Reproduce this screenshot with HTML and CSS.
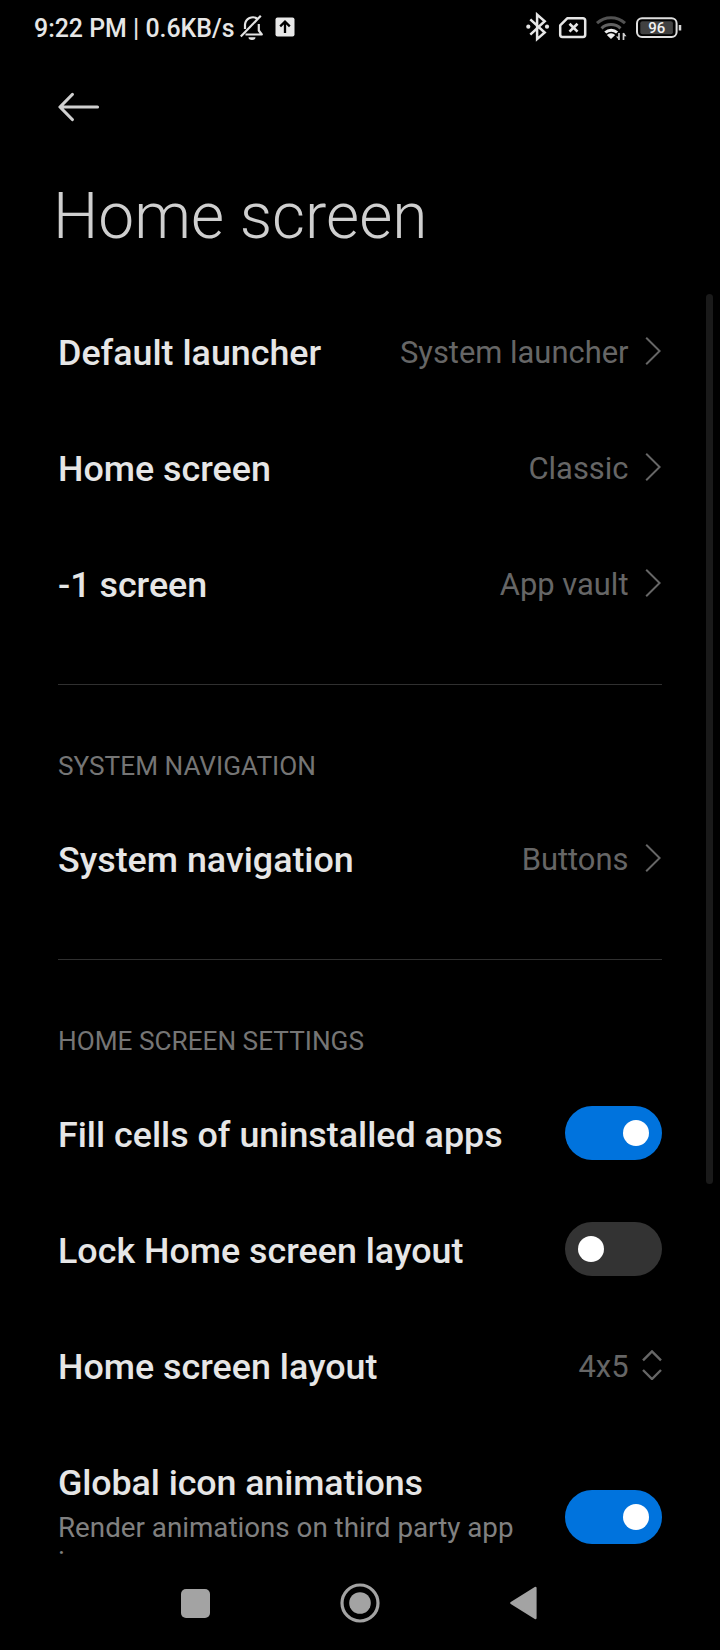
FILE: index.html
```html
<!DOCTYPE html>
<html lang="en">
<head>
<meta charset="utf-8">
<title>Home screen</title>
<link rel="stylesheet" href="styles.css">
</head>
<body>
<div class="phone">
  <header class="status">
    <span class="clock">9:22 PM | 0.6KB/s</span>
    <svg class="bell" width="24" height="28" viewBox="0 0 24 28" fill="none" stroke="#e4e4e4" stroke-width="2.2" stroke-linejoin="round">
      <path d="M17.3 4.6A8 8 0 0 0 5 10.5V15M5.5 20.5h16.3l-3-4V10"/><path d="M.8 22.4 20.8 1.8" /><path d="M8.5 23.3h7a3.5 2.7 0 0 1-7 0z" fill="#e4e4e4" stroke="none"/>
    </svg>
    <svg class="upload" width="20" height="20" viewBox="0 0 20 20">
      <rect x=".5" y=".5" width="19" height="19" rx="2" fill="#e8e8e8"/><path d="M10 16V5M5.2 9.4 10 4.6l4.8 4.8" fill="none" stroke="#000" stroke-width="2.3"/>
    </svg>
    <span class="spacer"></span>
    <svg class="status-icons" width="160" height="32" viewBox="0 0 160 32" fill="none">
      <g stroke="#e6e6e6" stroke-width="2.5"><path d="m4.3 7.3 14.4 13.2-7.6 6.6V2.6l7.6 6.6L4.3 22.6"/></g>
      <g fill="#e6e6e6"><circle cx="2.3" cy="14.7" r="2.1"/><circle cx="21" cy="14.7" r="2.1"/></g>
      <path d="M41.2 6.3H57a2.2 2.2 0 0 1 2.2 2.2v14.3A2.2 2.2 0 0 1 57 25H36.4a2.2 2.2 0 0 1-2.2-2.2v-9.4z" stroke="#e6e6e6" stroke-width="2.5" stroke-linejoin="round"/>
      <path d="m43.5 11.8 8 7.8m0-7.8-8 7.8" stroke="#e6e6e6" stroke-width="2.7"/>
      <g stroke-width="3"><path d="M71 11.2a20.5 20.5 0 0 1 28 0" stroke="#525252"/><path d="M75.5 16.3a14 14 0 0 1 19 0" stroke="#626262"/><path d="M79.3 20.5a8.6 8.6 0 0 1 11.8 0" stroke="#ededed"/></g>
      <path d="m80.8 22.9 4.2 4.2 4.2-4.2a6.3 6.3 0 0 0-8.4 0z" fill="#ededed"/>
      <path d="M93 21v7M97.5 28v-7" stroke="#cfcfcf" stroke-width="1.7"/><path d="m90 24.6 3 3.5v-3.5zM100.5 24.2l-3-3.6v3.6z" fill="#cfcfcf"/>
      <rect x="111" y="6.3" width="39.6" height="18.8" rx="5" stroke="#dedede" stroke-width="2"/>
      <rect x="114.3" y="9.2" width="32.6" height="13" rx="2" fill="#414141"/>
      <path d="M154 13v5.5" stroke="#d5d5d5" stroke-width="2.5"/>
      <text x="130.8" y="21.2" class="battery">96</text>
    </svg>
  </header>
  <nav class="back">
    <svg width="42" height="30" viewBox="0 0 42 30" fill="none" stroke="#cfcfcf" stroke-width="3.2" stroke-linecap="round" stroke-linejoin="round"><path d="M39.5 15H2.5M14.3 2.5 2 15l12.3 12.5"/></svg>
  </nav>
  <h1 class="title">Home screen</h1>
  <main class="list">
    <section class="group">
      <div class="row"><span class="label">Default launcher</span><span class="value">System launcher</span><svg class="chev" width="16" height="30" viewBox="0 0 16 30"><path d="M1.2 1.8 14.6 15 1.2 28.2"/></svg></div>
      <div class="row"><span class="label">Home screen</span><span class="value">Classic</span><svg class="chev" width="16" height="30" viewBox="0 0 16 30"><path d="M1.2 1.8 14.6 15 1.2 28.2"/></svg></div>
      <div class="row"><span class="label">-1 screen</span><span class="value">App vault</span><svg class="chev" width="16" height="30" viewBox="0 0 16 30"><path d="M1.2 1.8 14.6 15 1.2 28.2"/></svg></div>
    </section>
    <section class="group">
      <h2 class="heading">SYSTEM NAVIGATION</h2>
      <div class="row"><span class="label">System navigation</span><span class="value">Buttons</span><svg class="chev" width="16" height="30" viewBox="0 0 16 30"><path d="M1.2 1.8 14.6 15 1.2 28.2"/></svg></div>
    </section>
    <section class="group">
      <h2 class="heading">HOME SCREEN SETTINGS</h2>
      <div class="row"><span class="label">Fill cells of uninstalled apps</span><span class="toggle on"><i class="knob"></i></span></div>
      <div class="row"><span class="label">Lock Home screen layout</span><span class="toggle"><i class="knob"></i></span></div>
      <div class="row"><span class="label">Home screen layout</span><span class="value">4x5</span><svg class="updown" width="20" height="30" viewBox="0 0 20 30"><path d="m1 10.4 9-9 9 9M1 20l9 9 9-9"/></svg></div>
      <div class="row tall"><div class="copy"><span class="label">Global icon animations</span><p class="sub">Render animations on third party app icons</p></div><span class="toggle on"><i class="knob"></i></span></div>
    </section>
  </main>
  <footer class="navbar">
    <svg width="29" height="29"><rect width="29" height="29" rx="5" fill="#a3a3a3"/></svg>
    <svg width="40" height="40"><circle cx="20" cy="20" r="18" fill="none" stroke="#a3a3a3" stroke-width="3.2"/><circle cx="20" cy="20" r="10.8" fill="#a3a3a3"/></svg>
    <svg width="28" height="34" viewBox="0 0 28 34"><path d="M25.4 2v30L1.4 17z" fill="#a3a3a3" stroke="#a3a3a3" stroke-width="2.4" stroke-linejoin="round"/></svg>
  </footer>
  <div class="scrollbar"></div>
</div>
</body>
</html>
```
FILE: styles.css
```css
* { box-sizing: border-box; }
body { margin: 0; background: #000; font-family: Roboto, sans-serif; }
svg { display: block; flex: none; }
.phone { position: relative; width: 720px; height: 1650px; display: flex; flex-direction: column; overflow: hidden; background: #000; }
.status { height: 56px; flex: none; display: flex; align-items: center; padding: 0 34px 0 34px; color: #e6e6e6; }
.clock { margin-top: 2px; font-size: 24.9px; font-weight: 500; line-height: 30px; white-space: nowrap; }
.bell { margin: -1px 0 0 5px; }
.upload { margin: -2px 0 0 11px; }
.spacer { flex: 1; }
.status-icons { margin-top: -1px; }
.battery { font-size: 15px; font-weight: 500; fill: #f2f2f2; text-anchor: middle; }
.back { height: 102px; flex: none; padding: 36px 0 0 57.5px; }
.title { margin: 0; height: 137px; flex: none; padding: 21px 0 0 53px; font-size: 64px; line-height: 76px; font-weight: 300; color: #cfcfcf; white-space: nowrap; }
.list { height: 1259px; flex: none; overflow: hidden; padding: 0 58px; }
.group + .group { border-top: 1px solid #303030; margin-top: 41px; }
.row { height: 116px; display: flex; align-items: center; }
.label { flex: 1; font-size: 35.85px; line-height: 42px; font-weight: 500; color: #e6e6e6; white-space: nowrap; }
.value { font-size: 30.9px; line-height: 36px; color: #666; white-space: nowrap; }
.chev, .updown { fill: none; stroke: #666; stroke-width: 2; }
.chev { margin: -5px 1px 0 16.5px; }
.updown { margin: -4px 0 0 13.5px; stroke-width: 2.4; }
.heading { margin: 0; height: 117px; padding-top: 65px; font-size: 26.2px; line-height: 32px; font-weight: 400; color: #757575; }
.toggle { width: 97px; height: 54px; border-radius: 27px; padding: 14px 13px; background: #333; margin-top: -4px; display: flex; flex: none; }
.toggle.on { background: #0073dd; justify-content: flex-end; }
.knob { width: 26px; height: 26px; border-radius: 50%; background: #fff; }
.tall { height: 184px; align-items: flex-start; }
.tall .toggle { margin-top: 65px; }
.copy { flex: 1; display: flex; flex-direction: column; padding-top: 37px; }
.copy .label { flex: none; letter-spacing: -0.1px; }
.sub { margin: 7px 0 0; width: 470px; font-size: 27.75px; line-height: 34px; color: #808080; }
.navbar { flex: 1; display: flex; align-items: center; gap: 130px; padding: 2px 0 0 181px; }
.scrollbar { position: absolute; left: 706px; top: 294px; width: 7px; height: 890px; border-radius: 4px; background: #1a1a1a; }
```
